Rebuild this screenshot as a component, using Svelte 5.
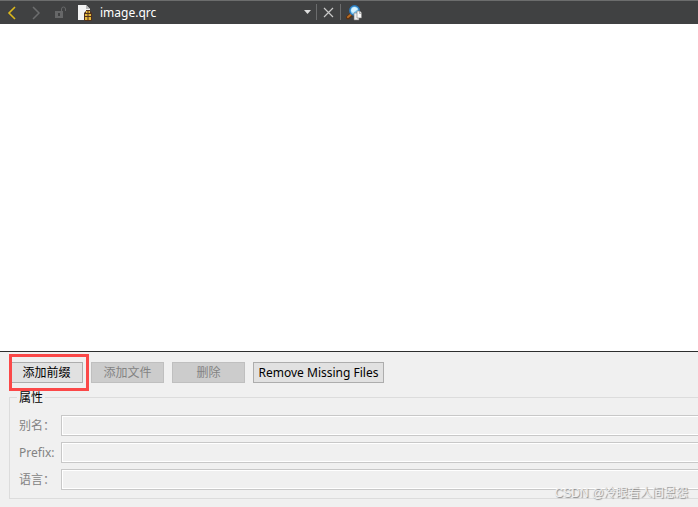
<script lang="ts">
    let files = $state(['image.qrc']);
    let current = $state('image.qrc');
    let alias = $state('');
    let prefix = $state('');
    let language = $state('');
</script>

<div class="editor">
    <header class="toolbar">
        <button class="tool back" aria-label="Back">
            <svg width="10" height="14" viewBox="0 0 10 14">
                <path d="M8 1 L2 7 L8 13" fill="none" stroke="#dcb81c" stroke-width="1.6" />
            </svg>
        </button>
        <button class="tool forward" aria-label="Forward" disabled>
            <svg width="10" height="14" viewBox="0 0 10 14">
                <path d="M2 1 L8 7 L2 13" fill="none" stroke="#6c6d6e" stroke-width="1.5" />
            </svg>
        </button>
        <button class="tool lock" aria-label="Lock" disabled>
            <svg width="13" height="13" viewBox="0 0 13 13">
                <path d="M1 5H9V12H1Z" fill="#666768" />
                <path d="M7.5 5V3Q7.5 1 9.5 1Q11.5 1 11.5 3V5" fill="none" stroke="#666768" />
                <path d="M4 7H6V10H4Z" fill="#404142" />
            </svg>
        </button>
        <div class="document">
            <svg class="file-icon" width="15" height="16" viewBox="0 0 15 16">
                <path d="M0 0H8L12 4V15H0Z" fill="#f3f3f3" />
                <path d="M8 0V4H12Z" fill="#b9b9b9" />
                <path d="M6 8L8 6V5H12V6L14 8V15L13 16H7L6 15Z" fill="#50301c" />
                <path d="M8 6H9.500V8H8zM10.500 6H12V8H10.500zM7 9H9.500V11H7zM10.500 9H13V11H10.500zM7 12H9.500V15H7zM10.500 12H13V15H10.500z" fill="#e5b83c" />
            </svg>
            <select aria-label="Open document" bind:value={current}>
                {#each files as file}
                    <option value={file}>{file}</option>
                {/each}
            </select>
            <svg class="arrow" width="7" height="4" viewBox="0 0 7 4">
                <path d="M0 0H7L3.500 4Z" fill="#dedede" />
            </svg>
        </div>
        <button class="tool close" aria-label="Close document">
            <svg width="11" height="11" viewBox="0 0 11 11">
                <path d="M1 1L10 10M10 1L1 10" stroke="#c8c8c8" stroke-width="1.2" />
            </svg>
        </button>
        <button class="tool find" aria-label="Find in files">
            <svg width="16" height="16" viewBox="0 0 16 16">
                <path d="M2 12.500L5.500 9.500" stroke="#5b3213" stroke-width="4" stroke-linecap="round" />
                <path d="M2 12L5 9.500" stroke="#b96d25" stroke-width="2" stroke-linecap="round" />
                <circle cx="8.500" cy="5.500" r="4.700" fill="#7cc8f4" stroke="#2878bc" stroke-width="1.500" />
                <path d="M5 6Q5.500 2 9 2L12 4L7 8Z" fill="#d8f3ff" />
                <path d="M8 8H11L13 10V15H8Z" fill="#eeeeee" stroke="#777777" stroke-width=".6" />
                <path d="M11 6H14L15.600 8V13H11Z" fill="#fafafa" stroke="#777777" stroke-width=".6" />
                <path d="M13.500 6V8.500H15.500" fill="none" stroke="#888888" stroke-width=".6" />
            </svg>
        </button>
    </header>

    <main class="tree"></main>

    <section class="panel">
        <div class="actions">
            <div class="highlighted">
                <button class="action">添加前缀</button>
            </div>
            <button class="action" disabled>添加文件</button>
            <button class="action" disabled>删除</button>
            <button class="action wide">Remove Missing Files</button>
        </div>

        <fieldset disabled>
            <legend>属性</legend>
            <div class="row">
                <label for="alias">别名：</label>
                <input id="alias" type="text" bind:value={alias} />
            </div>
            <div class="row">
                <label for="prefix">Prefix:</label>
                <input id="prefix" type="text" bind:value={prefix} />
            </div>
            <div class="row">
                <label for="language">语言：</label>
                <input id="language" type="text" bind:value={language} />
            </div>
        </fieldset>
        <span class="watermark">CSDN @冷眼看人间恩怨</span>
    </section>
</div>

<style>
    :global(body) {
        margin: 0;
    }

    .editor {
        display: flex;
        flex-direction: column;
        min-height: 100vh;
        overflow: hidden;
        background: #ffffff;
        font-family: "Noto Sans", "Noto Sans CJK SC", sans-serif;
        font-size: 12px;
    }

    button,
    input,
    select {
        box-sizing: border-box;
        margin: 0;
        font: inherit;
    }

    .toolbar {
        display: flex;
        align-items: center;
        box-sizing: border-box;
        height: 24px;
        border-top: 1px solid #6c6d6d;
        background: #404142;
    }

    .tool {
        display: flex;
        align-items: center;
        justify-content: center;
        width: 24px;
        height: 23px;
        padding: 0;
        border: none;
        background: none;
        flex-shrink: 0;
    }

    .document {
        display: flex;
        align-items: center;
        position: relative;
        box-sizing: border-box;
        width: 244px;
        height: 23px;
        padding-left: 6px;
    }

    .file-icon {
        flex-shrink: 0;
    }

    select {
        flex: 1;
        height: 23px;
        padding: 0 20px 0 7px;
        border: none;
        background: none;
        color: #ffffff;
        appearance: none;
    }

    option {
        color: #000000;
    }

    .arrow {
        position: absolute;
        right: 5px;
        top: 9px;
        pointer-events: none;
    }

    .close,
    .find {
        position: relative;
    }

    .close::before,
    .find::before {
        content: "";
        position: absolute;
        left: 0;
        top: 3px;
        width: 1px;
        height: 16px;
        background: #6b6c6d;
    }

    .find {
        width: 28px;
    }

    .tree {
        flex: 1;
    }

    .panel {
        position: relative;
        padding: 10px 0 8px 9px;
        border-top: 1px solid #2d2e2e;
        background: #f0f0f0;
    }

    .actions {
        display: flex;
        gap: 8px;
        padding-left: 1px;
    }

    .highlighted {
        position: relative;
    }

    .highlighted::after {
        content: "";
        position: absolute;
        inset: -8px -6px -8px -1px;
        border: 3px solid #fb4848;
        pointer-events: none;
        z-index: 1;
    }

    .action {
        width: 73px;
        height: 21px;
        padding: 0;
        border: 1px solid #adadad;
        background: #e1e1e1;
        color: #000000;
        line-height: 19px;
        white-space: nowrap;
    }

    .action:disabled {
        border-color: #bfbfbf;
        background: #cccccc;
        color: #838383;
    }

    .wide {
        width: 131px;
    }

    fieldset {
        display: flex;
        flex-direction: column;
        gap: 6px;
        min-width: 0;
        margin: 5px 0 0;
        padding: 9px 0 8px 9px;
        border: 1px solid #dcdcdc;
        border-right: none;
    }

    legend {
        margin-left: -2px;
        padding: 2px 2px 0;
        color: #000000;
        line-height: 16px;
    }

    .row {
        display: flex;
        align-items: center;
    }

    label {
        width: 42px;
        flex-shrink: 0;
        color: #838383;
        line-height: 21px;
        white-space: nowrap;
    }

    input {
        flex: 1;
        min-width: 0;
        height: 21px;
        padding: 0 4px;
        border: 1px solid #c8c8c8;
        border-right: none;
        border-radius: 0;
        background: #f0f0f0;
        box-shadow: inset 1px 1px #ffffff, inset 0 -1px #ffffff;
    }

    .watermark {
        position: absolute;
        right: 10px;
        bottom: 6px;
        color: #f0f0f0;
        font-family: "Liberation Sans", "Noto Sans CJK SC", sans-serif;
        line-height: 16px;
        text-shadow: 1px 1px 1px #888888;
    }
</style>
